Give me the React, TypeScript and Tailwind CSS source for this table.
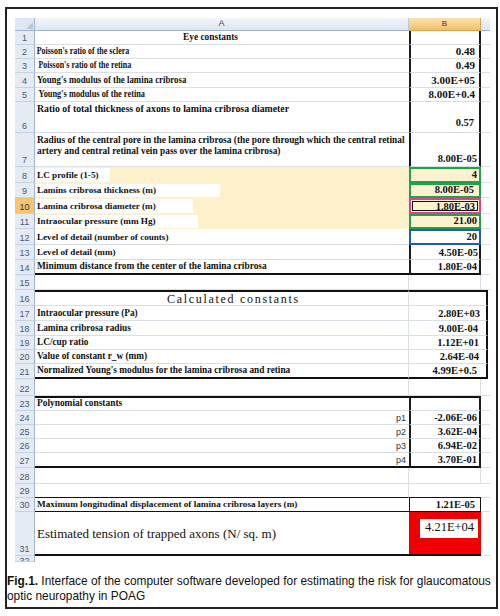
import React from "react";

type RowDef = {
  n: string;
  h: string;
  a?: React.ReactNode;
  b?: React.ReactNode;
  aCls?: string;
  bCls?: string;
  cCls?: string;
  nCls?: string;
};

const GA = "border-r border-r-[#dadee6] border-b border-b-[#dadee6]";
const GB = "border-r border-r-[#dadee6] border-b border-b-[#dadee6]";
const GC = "border-b border-b-[#dadee6]";
const BOX_B = "border-l-2 border-l-[#1c1c1c] border-r-2 border-r-[#1c1c1c] border-b border-b-[#dadee6]";

const lbl = "font-['Liberation_Serif',serif] font-bold leading-[11px] text-[#111] whitespace-nowrap";
const num = "font-['Liberation_Serif',serif] font-bold leading-[11px] text-[#111] whitespace-nowrap";

function L({
  children,
  size = "text-[9.3px]",
  pad = "pl-[2px]",
  sx = "",
}: {
  children: React.ReactNode;
  size?: string;
  pad?: string;
  sx?: string;
}) {
  return <div className={`self-end pb-[1px] origin-left ${pad} ${lbl} ${size} ${sx}`}>{children}</div>;
}

function V({ children, size = "text-[10.5px]", pad = "pr-[4px]" }: { children: React.ReactNode; size?: string; pad?: string }) {
  return <div className={`self-end ml-auto pb-[1px] ${pad} ${num} ${size}`}>{children}</div>;
}

function Row({ n, h, a, b, aCls, bCls, cCls, nCls }: RowDef) {
  return (
    <div className={`flex ${h}`}>
      <div
        className={`w-[20px] shrink-0 overflow-hidden flex justify-center border-b border-b-[#c3d1e3] border-r border-r-[#9fb3cd] font-['Liberation_Sans',sans-serif] text-[9px] leading-[10px] ${nCls ?? "bg-[#e4ebf5] text-[#44597a] items-end pb-[1px]"}`}
      >
        {n}
      </div>
      <div className={`w-[374px] shrink-0 flex ${aCls ?? GA}`}>{a}</div>
      <div className={`w-[72px] shrink-0 flex ${bCls ?? GB}`}>{b}</div>
      <div className={`flex-1 ${cCls ?? GC}`} />
    </div>
  );
}

function YellowLabel({ w, children }: { w: string; children: React.ReactNode }) {
  return (
    <div className={`${w} bg-white self-stretch my-[1px] flex items-end pl-[2px] pb-[1px] ${lbl} text-[9.2px]`}>{children}</div>
  );
}

const SEC2_C = "border-r-2 border-r-[#111] border-b border-b-[#dadee6] mr-[2px]";

function Sheet() {
  const rows: RowDef[] = [
    {
      n: "1",
      h: "h-[14px]",
      a: <L size="text-[9.4px]" pad="pl-[148px]">Eye constants</L>,
      aCls: "border-b border-b-[#dadee6]",
      bCls: BOX_B,
    },
    {
      n: "2",
      h: "h-[14px]",
      a: <L size="text-[9.4px]" sx="scale-x-[0.85]">Poisson's ratio of the sclera</L>,
      b: <V size="text-[11px]">0.48</V>,
      aCls: "border-b border-b-[#dadee6]",
      bCls: BOX_B,
    },
    {
      n: "3",
      h: "h-[14px]",
      a: <L size="text-[9.4px]" pad="pl-[4px]" sx="scale-x-[0.85]">Poisson's ratio of the retina</L>,
      b: <V size="text-[11px]">0.49</V>,
      aCls: "border-b border-b-[#dadee6]",
      bCls: BOX_B,
    },
    {
      n: "4",
      h: "h-[15px]",
      a: <L size="text-[9.4px]" sx="scale-x-[0.94]">Young's modulus of the lamina cribrosa</L>,
      b: <V size="text-[11px]">3.00E+05</V>,
      aCls: "border-b border-b-[#dadee6]",
      bCls: BOX_B,
    },
    {
      n: "5",
      h: "h-[14px]",
      a: <L size="text-[9.4px]" pad="pl-[4px]" sx="scale-x-[0.89]">Young's modulus of the retina</L>,
      b: <V size="text-[11px]">8.00E+0.4</V>,
      aCls: "border-b border-b-[#dadee6]",
      bCls: BOX_B,
    },
    {
      n: "6",
      h: "h-[31px]",
      a: <div className={`self-start pl-[2px] pt-[1px] ${lbl} text-[9.8px]`}>Ratio of total thickness of axons to lamina cribrosa diameter</div>,
      b: <V pad="pr-[5px] pb-[4px]">0.57</V>,
      aCls: "border-b border-b-[#dadee6]",
      bCls: BOX_B,
    },
    {
      n: "7",
      h: "h-[34px]",
      a: (
        <div className={`self-start pl-[2px] pt-[2px] ${lbl} text-[9.4px]`}>
          Radius of the central pore in the lamina cribrosa (the pore through which the central retinal
          <br />
          artery and central retinal vein pass over the lamina cribrosa)
        </div>
      ),
      b: <V pad="pr-[2px] pb-[2px]">8.00E-05</V>,
      aCls: "border-b border-b-[#dadee6]",
      bCls: BOX_B,
    },
    {
      n: "8",
      h: "h-[16px]",
      a: <YellowLabel w="w-[75px]">LC profile (1-5)</YellowLabel>,
      b: <V pad="pr-[2px]">4</V>,
      aCls: "bg-[#fdf1cc]",
      bCls: "border-2 border-[#1fa34a] bg-[#fdf2d0]",
    },
    {
      n: "9",
      h: "h-[15px]",
      a: <YellowLabel w="w-[185px]">Lamins cribrosa thickness (m)</YellowLabel>,
      b: <V pad="pr-[5px]">8.00E-05</V>,
      aCls: "bg-[#fdf1cc]",
      bCls: "border-2 border-[#1fa34a] bg-[#fdf2d0]",
    },
    {
      n: "10",
      h: "h-[16px]",
      nCls: "bg-[#f7c46f] text-[#333] items-end pb-[1px]",
      a: <YellowLabel w="w-[158px]">Lamina cribrosa diameter (m)</YellowLabel>,
      b: (
        <div className="flex-1 m-[1px] border border-[#111] flex items-center justify-end pr-[2px]">
          <span className={`${num} text-[10.5px]`}>1.80E-03</span>
        </div>
      ),
      aCls: "bg-[#fdf1cc]",
      bCls: "border-2 border-[#e2408e] bg-[#fdf2d0]",
    },
    {
      n: "11",
      h: "h-[15px]",
      a: <YellowLabel w="w-[163px]">Intraocular pressure (mm Hg)</YellowLabel>,
      b: <V pad="pr-[2px]">21.00</V>,
      aCls: "bg-[#fdf1cc]",
      bCls: "border-2 border-[#1fa34a] bg-[#fdf2d0]",
    },
    {
      n: "12",
      h: "h-[16px]",
      a: <L size="text-[9.1px]">Level of detail (number of counts)</L>,
      b: <V pad="pr-[2px]">20</V>,
      aCls: "border-b border-b-[#dadee6]",
      bCls: "border-2 border-[#1f5ea8]",
    },
    { n: "13", h: "h-[15px]", a: <L size="text-[9.1px]">Level of detail (mm)</L>, b: <V pad="pr-[1px]">4.50E-05</V>, aCls: "border-b border-b-[#dadee6]", bCls: BOX_B },
    {
      n: "14",
      h: "h-[15px]",
      a: <L size="text-[9.4px]">Minimum distance from the center of the lamina cribrosa</L>,
      b: <V pad="pr-[2px]">1.80E-04</V>,
      aCls: "border-b-2 border-b-[#111]",
      bCls: "border-l-2 border-l-[#1c1c1c] border-r-2 border-r-[#1c1c1c] border-b-2 border-b-[#111]",
    },
    { n: "15", h: "h-[15px]" },
    {
      n: "16",
      h: "h-[16px]",
      a: (
        <div className="self-end pl-[132px] font-['Liberation_Serif',serif] text-[12px] leading-[12px] tracking-[1.7px] text-[#111] whitespace-nowrap">
          Calculated constants
        </div>
      ),
      aCls: "border-t-2 border-t-[#111] border-b border-b-[#dadee6] border-r border-r-[#dadee6]",
      bCls: "border-t-2 border-t-[#111] border-b border-b-[#dadee6]",
      cCls: "border-t-2 border-t-[#111] border-r-2 border-r-[#111] border-b border-b-[#dadee6] mr-[2px]",
    },
    { n: "17", h: "h-[15px]", a: <L>Intraocular pressure (Pa)</L>, b: <V pad="pr-[1px]">2.80E+03</V>, aCls: GA, bCls: "border-b border-b-[#dadee6]", cCls: SEC2_C },
    { n: "18", h: "h-[15px]", a: <L>Lamina cribrosa radius</L>, b: <V pad="pr-[3px]">9.00E-04</V>, aCls: GA, bCls: "border-b border-b-[#dadee6]", cCls: SEC2_C },
    { n: "19", h: "h-[14px]", a: <L>LC/cup ratio</L>, b: <V pad="pr-[2px]">1.12E+01</V>, aCls: GA, bCls: "border-b border-b-[#dadee6]", cCls: SEC2_C },
    { n: "20", h: "h-[14px]", a: <L>Value of constant r_w (mm)</L>, b: <V pad="pr-[2px]">2.64E-04</V>, aCls: GA, bCls: "border-b border-b-[#dadee6]", cCls: SEC2_C },
    {
      n: "21",
      h: "h-[15px]",
      a: <L>Normalized Young's modulus for the lamina cribrosa and retina</L>,
      b: <V pad="pr-[4px]">4.99E+0.5</V>,
      aCls: "border-r border-r-[#dadee6] border-b-2 border-b-[#111]",
      bCls: "border-b-2 border-b-[#111]",
      cCls: "border-r-2 border-r-[#111] border-b-2 border-b-[#111] mr-[2px]",
    },
    { n: "22", h: "h-[17px]" },
    {
      n: "23",
      h: "h-[15px]",
      a: <L size="text-[9.4px]">Polynomial constants</L>,
      aCls: "border-t-2 border-t-[#111] border-b border-b-[#dadee6]",
      bCls: "border-t-2 border-t-[#111] border-l-2 border-l-[#1c1c1c] border-r-2 border-r-[#1c1c1c] border-b border-b-[#dadee6]",
    },
    ...["p1", "p2", "p3", "p4"].map((p, i): RowDef => {
      const vals = ["-2.06E-06", "3.62E-04", "6.94E-02", "3.70E-01"];
      const last = i === 3;
      return {
        n: String(24 + i),
        h: last ? "h-[15px]" : "h-[14px]",
        a: (
          <div className="self-end ml-auto pr-[3px] pb-[1px] font-['Liberation_Sans',sans-serif] text-[9px] leading-[10px] text-[#333]">
            {p}
          </div>
        ),
        b: <V pad="pr-[2px]">{vals[i]}</V>,
        aCls: last ? "border-b-2 border-b-[#111]" : "border-b border-b-[#dadee6]",
        bCls: last
          ? "border-l-2 border-l-[#1c1c1c] border-r-2 border-r-[#1c1c1c] border-b-2 border-b-[#111]"
          : "border-l-2 border-l-[#1c1c1c] border-r-2 border-r-[#1c1c1c] border-b border-b-[#dadee6]",
      };
    }),
    { n: "28", h: "h-[16px]" },
    { n: "29", h: "h-[14px]", aCls: "border-r border-r-[#dadee6] border-b border-b-[#111]", bCls: "border-b border-b-[#111]" },
    {
      n: "30",
      h: "h-[14px]",
      a: <L size="text-[9.2px]">Maximum longitudinal displacement of lamina cribrosa layers (m)</L>,
      b: <V pad="pr-[5px]">1.21E-05</V>,
      aCls: "border-b border-b-[#111]",
      bCls: "border-l border-l-[#111] border-r border-r-[#111] border-b border-b-[#111]",
    },
    {
      n: "31",
      h: "h-[44px]",
      a: (
        <div className="self-center pl-[2px] pt-[2px] font-['Liberation_Serif',serif] text-[13px] leading-[14px] text-[#111] whitespace-nowrap">
          Estimated tension of trapped axons (N/ sq. m)
        </div>
      ),
      b: (
        <div className="ml-[11px] mt-[7px] w-[58px] h-[19px] bg-white pl-[5px] pt-[2px] font-['Liberation_Serif',serif] text-[12.5px] leading-[13px] text-[#111]">
          4.21E+04
        </div>
      ),
      aCls: "border-b-2 border-b-[#111]",
      bCls: "bg-[#f00000] border-b-2 border-b-[#111]",
    },
    { n: "32", h: "h-[6px]", nCls: "bg-[#e4ebf5] text-[#44597a] items-start", aCls: "", bCls: "", cCls: "" },
  ];

  return (
    <div className="w-[475px] flex flex-col">
      <div className="flex h-[13px]">
        <div className="w-[20px] shrink-0 bg-[#dfe7f2] border-r border-r-[#9fb3cd] border-b border-b-[#9fb3cd] flex items-end justify-end p-[1px]">
          <div className="w-0 h-0 border-l-[7px] border-l-transparent border-b-[7px] border-b-[#b7c6d9]" />
        </div>
        <div className="w-[374px] shrink-0 bg-gradient-to-b from-[#f2f5fa] to-[#dde5f0] border-r border-r-[#b9c9dc] border-b border-b-[#9fb3cd] flex items-center justify-center font-['Liberation_Sans',sans-serif] text-[9px] text-[#3b4b63]">
          A
        </div>
        <div className="w-[72px] shrink-0 bg-gradient-to-b from-[#fbe3ad] to-[#f3bf66] border-r border-r-[#d9a650] border-b border-b-[#d9a650] flex items-center justify-center font-['Liberation_Sans',sans-serif] text-[8px] text-[#4a3a1c]">
          B
        </div>
        <div className="flex-1 bg-gradient-to-b from-[#f2f5fa] to-[#dde5f0] border-b border-b-[#9fb3cd]" />
      </div>
      {rows.map((r) => (
        <Row key={r.n} {...r} />
      ))}
    </div>
  );
}

export default function App() {
  return (
    <div className="w-[500px] h-[616px] bg-white pt-[7px] pl-[5px]">
      <div className="w-[493px] h-[602px] border-2 border-[#222] flex flex-col">
        <div className="pl-[8px] pt-[9px]">
          <Sheet />
        </div>
        <div className="mt-[12px] font-['Liberation_Sans',sans-serif] text-[11.9px] leading-[15px] text-[#111] whitespace-nowrap">
          <span className="font-bold">Fig.1.</span> Interface of the computer software developed for estimating the risk for glaucomatous
          <br />
          optic neuropathy in POAG
        </div>
      </div>
    </div>
  );
}
